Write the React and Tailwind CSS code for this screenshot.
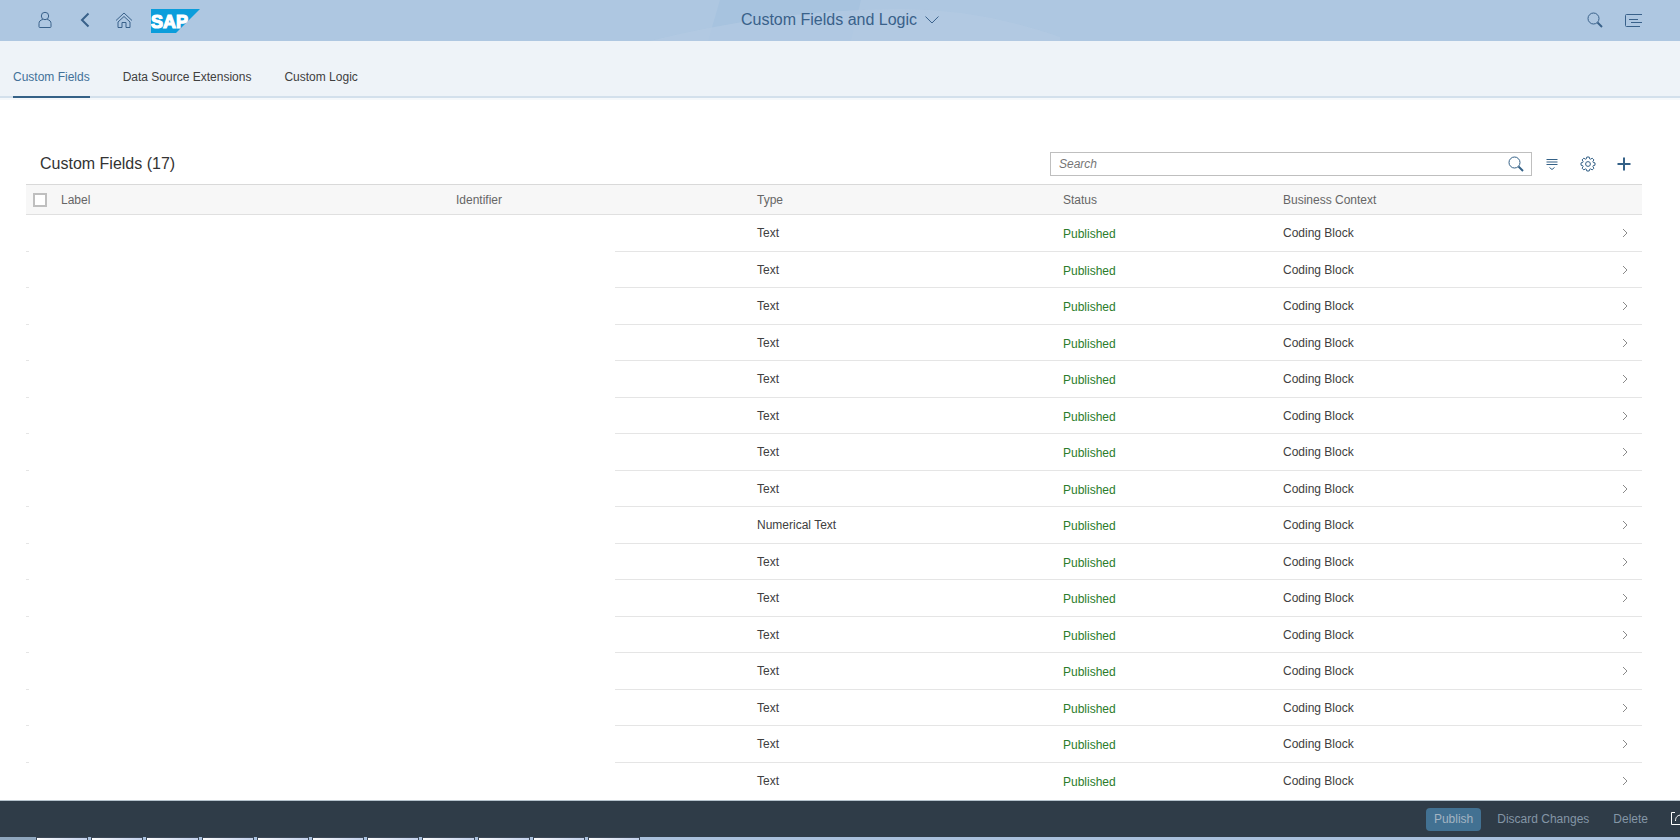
import { useState } from 'react';

const TABS = ['Custom Fields', 'Data Source Extensions', 'Custom Logic'];

const FIELDS = Array.from({ length: 16 }, (_, i) => ({
  id: i + 1,
  type: i === 8 ? 'Numerical Text' : 'Text',
  status: 'Published',
  context: 'Coding Block',
}));

const TASKS = Array.from({ length: 11 }, (_, i) => i);

function Icon({ size = 18, width = 1, className = '', children }) {
  return (
    <svg
      width={size}
      height={size}
      viewBox="0 0 18 18"
      fill="none"
      stroke="currentColor"
      strokeWidth={width}
      className={className}
      aria-hidden="true"
    >
      {children}
    </svg>
  );
}

function SearchIcon() {
  return (
    <Icon>
      <circle cx="7.5" cy="7.5" r="5.5" />
      <path d="M11.5 11.5l4.500 4.500" strokeWidth="2" />
    </Icon>
  );
}

function SapLogo() {
  return (
    <svg width="49" height="24" viewBox="0 0 49 24" role="img" aria-label="SAP">
      <path d="M0 0h49L25 24H0z" fill="#0b9ddb" />
      <text
        x="0"
        y="19"
        fill="#fff"
        stroke="#fff"
        strokeWidth="1.2"
        fontFamily="Liberation Sans, Arial, sans-serif"
        fontWeight="700"
        fontSize="18"
      >
        SAP
      </text>
    </svg>
  );
}

function ShellHeader() {
  return (
    <header className="relative flex h-[41px] shrink-0 items-center justify-between overflow-hidden bg-[#aec7e1] pl-[25px] pr-[27px] text-[#39618a]">
      <svg
        className="absolute left-1/2 top-0 -translate-x-1/2"
        width="440"
        height="41"
        viewBox="620 0 440 41"
        aria-hidden="true"
      >
        <path d="M720 0H861L851 41H708z" fill="#a7c3df" />
        <path d="M650 41Q780 9 900 9Q980 9 1060 37V41z" fill="#b4cae3" opacity="0.7" />
      </svg>

      <div className="relative flex items-center">
        <button className="flex w-10 justify-center pb-0.5" aria-label="User">
          <Icon>
            <circle cx="9" cy="5" r="3.7" />
            <path d="M6.8 8.5C4.2 9 3 10.5 3 12.5v3.2q0 .8.8.8h10.4q.8 0 .8-.8v-3.2c0-2-1.2-3.5-3.8-4" />
          </Icon>
        </button>
        <button className="flex w-10 justify-center pb-0.5" aria-label="Back">
          <Icon width="2">
            <path d="M12.5 2.5L6 9l6.5 6.5" />
          </Icon>
        </button>
        <button className="flex w-[38px] justify-center pb-0.5" aria-label="Home">
          <Icon>
            <path d="M1 9.5L9 2l8 7.5" />
            <path d="M3 11l6-5.5 6 5.5v5.500h-4v-5H7v5H3z" />
          </Icon>
        </button>
        <a href="#" className="ml-2">
          <SapLogo />
        </a>
      </div>

      <button className="absolute left-1/2 top-0 flex h-10 -translate-x-1/2 items-center gap-2 whitespace-nowrap text-base">
        Custom Fields and Logic
        <svg width="14" height="8" viewBox="0 0 14 8" fill="none" stroke="currentColor" aria-hidden="true">
          <path d="M.5.5L7 7l6.5-6.5" />
        </svg>
      </button>

      <div className="relative flex items-center pb-0.5">
        <button className="flex w-[39px] justify-center" aria-label="Search">
          <SearchIcon />
        </button>
        <button className="flex w-[39px] justify-center" aria-label="Notifications">
          <Icon>
            <path d="M17 3.500H1.5q-1 0-1 1v10q0 1 1 1H15M4 8.5h9M6 11.5h11" />
          </Icon>
        </button>
      </div>
    </header>
  );
}

function TabBar({ active, onSelect }) {
  return (
    <nav className="flex h-[57px] shrink-0 items-end gap-[33px] border-b-2 border-[#d3e0ec] bg-[#eef3f8] pl-[13px] shadow-[0_2px_0_#f5f8fb]">
      {TABS.map(tab => (
        <button
          key={tab}
          onClick={() => onSelect(tab)}
          className={
            tab === active
              ? '-mb-0.5 h-10 border-b-2 border-[#346187] text-[#427199]'
              : '-mb-0.5 h-10 border-b-2 border-transparent text-[#404040]'
          }
        >
          {tab}
        </button>
      ))}
    </nav>
  );
}

function Toolbar() {
  return (
    <div className="flex h-10 items-center justify-between pl-3.5 text-[#346187]">
      <h1 className="text-base text-[#333]">Custom Fields (17)</h1>
      <div className="flex items-center">
        <div className="mr-0.5 flex h-6 w-[482px] items-center border border-[#bfbfbf] bg-white pl-2 pr-1.5">
          <input
            type="search"
            aria-label="Search custom fields"
            placeholder="Search"
            className="min-w-0 flex-1 outline-none placeholder:italic placeholder:text-[#757575]"
          />
          <button aria-label="Start search">
            <SearchIcon />
          </button>
        </div>
        <button className="flex w-9 justify-center" aria-label="Group">
          <Icon>
            <path d="M3.5 4.5h11M3.5 7h11M3.5 9.5h11M6.5 12.5l2.5 2 2.5-2" />
          </Icon>
        </button>
        <button className="flex w-9 justify-center" aria-label="Settings">
          <Icon>
            <circle cx="9" cy="9" r="2.4" />
            <path
              strokeLinejoin="round"
              d="M7.8 2h2.400l.4 1.800 1 .4 1.600-1 1.700 1.700-1 1.600.4 1 1.700.4v2.300l-1.700.4-.4 1 1 1.600-1.700 1.700-1.600-1-1 .4-.4 1.700H7.800l-.4-1.700-1-.4-1.600 1-1.700-1.700 1-1.600-.4-1L2 10.200V7.900l1.700-.4.4-1-1-1.600 1.700-1.700 1.600 1 1-.4z"
            />
          </Icon>
        </button>
        <button className="flex w-9 justify-center" aria-label="Add">
          <Icon width="2">
            <path d="M9 2.500v13M2.500 9h13" />
          </Icon>
        </button>
      </div>
    </div>
  );
}

function FieldsTable() {
  return (
    <div className="relative">
      <table className="w-full table-fixed border-separate border-spacing-0 text-left">
        <colgroup>
          <col className="w-[35px]" />
          <col className="w-[395px]" />
          <col className="w-[301px]" />
          <col className="w-[306px]" />
          <col className="w-[220px]" />
          <col className="w-[323px]" />
          <col className="w-[36px]" />
        </colgroup>
        <thead>
          <tr className="h-[31px] bg-[#f7f7f7] text-[#666] [&>th]:border-y [&>th]:border-t-[#d9d9d9] [&>th]:border-b-[#e0e0e0] [&>th]:p-0 [&>th]:font-normal">
            <th>
              <input
                type="checkbox"
                aria-label="Select all"
                className="ml-[7px] block size-3.5 appearance-none border-2 border-[#bfbfbf] bg-white"
              />
            </th>
            <th>Label</th>
            <th>Identifier</th>
            <th>Type</th>
            <th>Status</th>
            <th>Business Context</th>
            <th></th>
          </tr>
        </thead>
        <tbody>
          {FIELDS.map(field => (
            <tr
              key={field.id}
              className="h-[37px] text-[#404040] even:h-9 [&>td]:border-b [&>td]:border-[#e5e5e5] [&>td]:p-0 last:[&>td]:border-transparent"
            >
              <td></td>
              <td></td>
              <td></td>
              <td>{field.type}</td>
              <td className="text-[#2b7c2b]"><span className="block pt-0.5">{field.status}</span></td>
              <td>{field.context}</td>
              <td>
                <svg
                  width="6"
                  height="10"
                  viewBox="0 0 6 10"
                  fill="none"
                  stroke="#8a8a8a"
                  className="ml-4 block"
                  aria-hidden="true"
                >
                  <path d="M1 1l4 4-4 4" />
                </svg>
              </td>
            </tr>
          ))}
        </tbody>
      </table>
      {/* label and identifier values are blanked out */}
      <div className="absolute bottom-0 left-[3px] top-[31px] w-[586px] bg-white" />
    </div>
  );
}

function FooterBar() {
  return (
    <footer className="flex h-[37px] shrink-0 items-center justify-end overflow-hidden border-t border-[#b5c3cd] bg-[#2f3c48] text-[#8496a6]">
      <button className="h-[23px] rounded-sm bg-[#427192] px-2 text-[#a3b4c2]">Publish</button>
      <button className="ml-4">Discard Changes</button>
      <button className="ml-6">Delete</button>
      <button className="-mr-2 ml-[22px] text-white" aria-label="Share">
        <Icon>
          <path d="M5 2.5H1.5v12H13V12M5.5 11c0-4 2-6 6-6h5M13 2l4 3-4 3.5" />
        </Icon>
      </button>
    </footer>
  );
}

function Taskbar() {
  return (
    <div className="flex h-[3px] shrink-0 bg-[#a9c0dc]">
      <div className="w-9 bg-[#8fa6bd]" />
      <div className="flex w-[607px]">
        {TASKS.map(t => (
          <div
            key={t}
            className="mr-[3px] flex-1 border-x border-t border-[#3b4756] bg-linear-to-r from-white to-[#c3d1ea]"
          />
        ))}
      </div>
    </div>
  );
}

export default function App() {
  const [tab, setTab] = useState(TABS[0]);

  return (
    <div className="flex h-screen flex-col bg-white font-['Liberation_Sans',Arial,sans-serif] text-xs">
      <ShellHeader />
      <TabBar active={tab} onSelect={setTab} />
      <main className="min-h-0 flex-1 overflow-hidden pl-[26px] pr-[38px] pt-[46px]">
        <Toolbar />
        <FieldsTable />
      </main>
      <FooterBar />
      <Taskbar />
    </div>
  );
}
